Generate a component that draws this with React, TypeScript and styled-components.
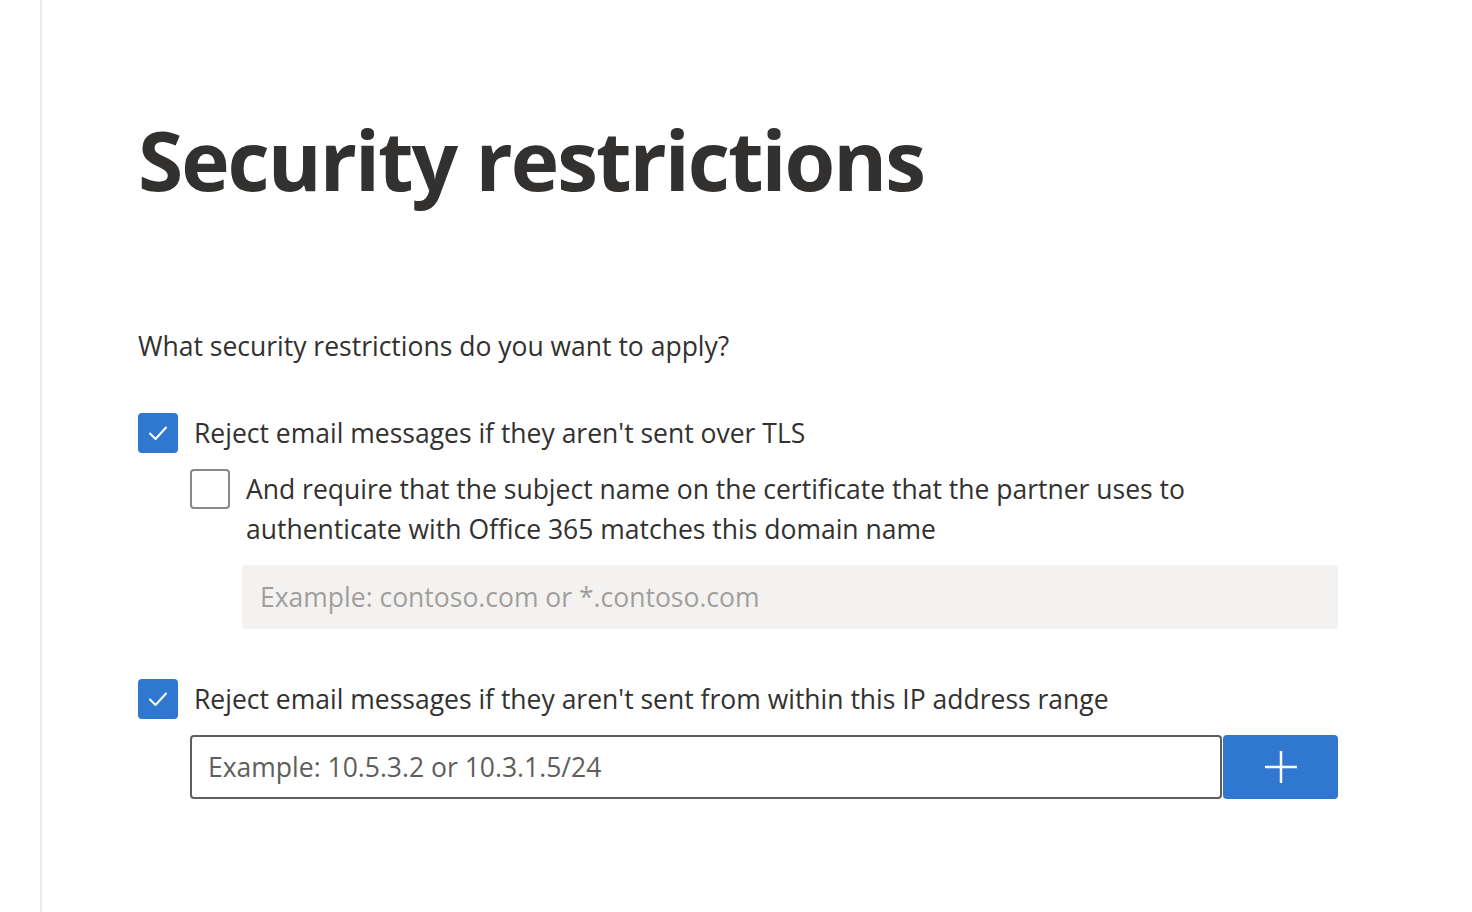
import React from "react";
import styled, { createGlobalStyle } from "styled-components";

const Global = createGlobalStyle`
  html, body { margin: 0; padding: 0; background: #ffffff; }
  body { font-family: "Open Sans", "Noto Sans", sans-serif; color: #323130; }
  * { box-sizing: border-box; }
`;

const Page = styled.div`
  display: flex;
  min-height: 912px;
`;

const Gutter = styled.div`
  width: 40px;
  flex: none;
`;

const Main = styled.main`
  flex: 1;
  border-left: 2px solid #edebe9;
  padding: 0 134px 0 96px;
`;

const Title = styled.h1`
  margin: 103px 0 0;
  font-size: 82px;
  line-height: 112px;
  font-weight: 700;
  letter-spacing: -2px;
  color: #323130;
`;

const Question = styled.p`
  margin: 111px 0 0;
  font-size: 26.5px;
  line-height: 40px;
  color: #323130;
`;

const Row = styled.div<{ $indent?: number; $top?: number }>`
  display: flex;
  align-items: flex-start;
  gap: 16px;
  margin-left: ${(p) => p.$indent ?? 0}px;
  margin-top: ${(p) => p.$top ?? 0}px;
`;

const Box = styled.span<{ $checked?: boolean }>`
  flex: none;
  width: 40px;
  height: 40px;
  border-radius: 4px;
  display: flex;
  align-items: center;
  justify-content: center;
  background: ${(p) => (p.$checked ? "#2f77cf" : "#ffffff")};
  border: 2px solid ${(p) => (p.$checked ? "#2f77cf" : "#8a8886")};
`;

const Label = styled.span`
  font-size: 26.5px;
  line-height: 40px;
  color: #323130;
  max-width: 960px;
`;

const DisabledInput = styled.div`
  margin: 16px 0 0 104px;
  height: 64px;
  border-radius: 4px;
  background: #f3f2f1;
  display: flex;
  align-items: center;
  padding-left: 18px;
  font-size: 26.5px;
  color: #a19f9d;
`;

const InputRow = styled.div`
  display: flex;
  margin: 16px 0 0 52px;
  height: 64px;
`;

const TextInput = styled.div`
  flex: 1;
  border: 2px solid #605e5c;
  border-radius: 4px;
  display: flex;
  align-items: center;
  padding-left: 16px;
  font-size: 26.5px;
  color: #605e5c;
`;

const AddButton = styled.button`
  width: 115px;
  margin-left: 1px;
  border: none;
  border-radius: 4px;
  background: #2f77cf;
  display: flex;
  align-items: center;
  justify-content: center;
  padding: 0;
`;

const Check = () => (
  <svg width="22" height="22" viewBox="0 0 22 22" fill="none">
    <path d="M3 11.5 L8.5 17 L19 5.5" stroke="#fff" strokeWidth="2" strokeLinecap="round" strokeLinejoin="round" />
  </svg>
);

const Plus = () => (
  <svg width="34" height="34" viewBox="0 0 34 34" fill="none">
    <path d="M17 1 V33 M1 17 H33" stroke="#fff" strokeWidth="2.5" />
  </svg>
);

export default function App() {
  return (
    <>
      <Global />
      <Page>
        <Gutter />
        <Main>
          <Title>Security restrictions</Title>
          <Question>What security restrictions do you want to apply?</Question>
          <Row $top={47}>
            <Box $checked><Check /></Box>
            <Label>Reject email messages if they aren't sent over TLS</Label>
          </Row>
          <Row $indent={52} $top={16}>
            <Box />
            <Label>
              And require that the subject name on the certificate that the partner uses to authenticate with Office 365 matches this domain name
            </Label>
          </Row>
          <DisabledInput>Example: contoso.com or *.contoso.com</DisabledInput>
          <Row $top={50}>
            <Box $checked><Check /></Box>
            <Label>Reject email messages if they aren't sent from within this IP address range</Label>
          </Row>
          <InputRow>
            <TextInput>Example: 10.5.3.2 or 10.3.1.5/24</TextInput>
            <AddButton aria-label="Add"><Plus /></AddButton>
          </InputRow>
        </Main>
      </Page>
    </>
  );
}
